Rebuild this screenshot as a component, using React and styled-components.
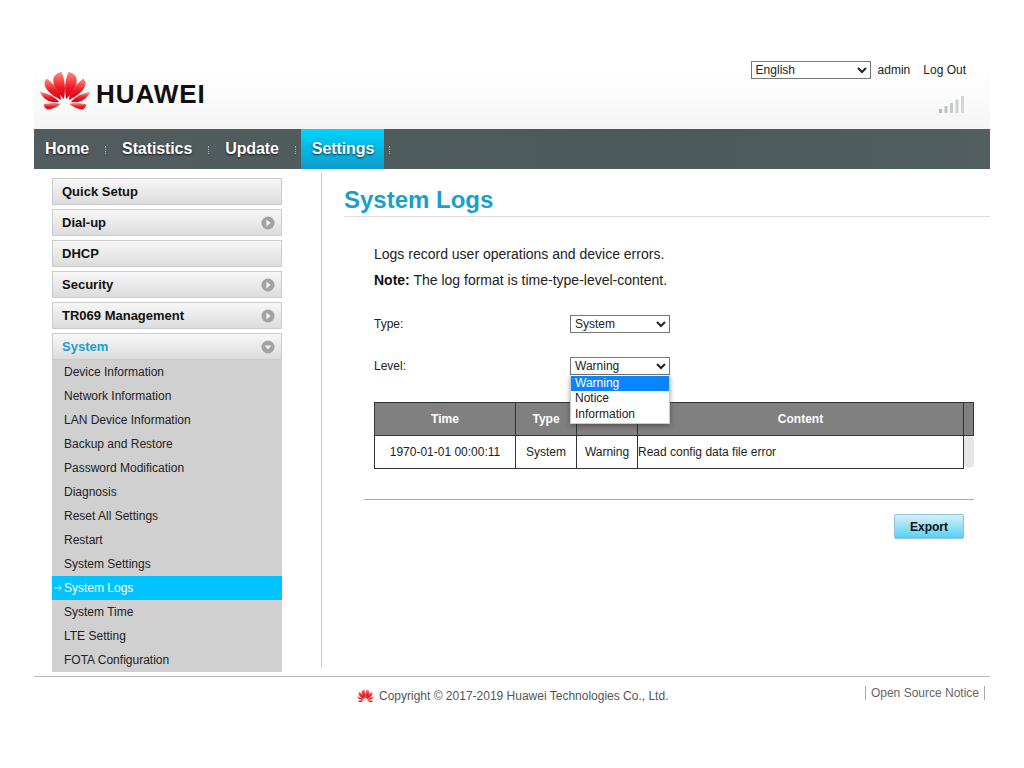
import React from 'react'
import styled, { createGlobalStyle } from 'styled-components'

const GlobalStyle = createGlobalStyle`
  html, body {
    margin: 0;
    padding: 0;
    background: #fff;
    font-family: "Liberation Sans", Arial, sans-serif;
    color: #222;
  }
`

const Page = styled.div`
  width: 956px;
  margin-left: 34px;
`

const Header = styled.header`
  height: 129px;
  display: flex;
  justify-content: space-between;
  background: linear-gradient(to bottom, #fff 65px, #fbfbfb 100px, #f4f4f4 129px);
`

const Brand = styled.div`
  display: flex;
  align-items: center;
  gap: 6px;
  padding: 72px 0 0 6px;
  height: 38px;
`

const Wordmark = styled.span`
  font-size: 26px;
  font-weight: 700;
  letter-spacing: 0.95px;
  color: #111;
  position: relative;
  top: 3px;
`

const TopRight = styled.div`
  display: flex;
  flex-direction: column;
  align-items: flex-end;
  padding: 61px 24px 0 0;
`

const UserBar = styled.div`
  display: flex;
  align-items: center;
  font-size: 12px;
  color: #222;
  height: 18px;
`

const Select = styled.select`
  width: ${props => props.$width}px;
  height: 18px;
  box-sizing: border-box;
  padding: 0;
  font-family: "Liberation Sans", Arial, sans-serif;
  font-size: 12px;
  color: #222;
  background: #fff;
`

const UserName = styled.span`
  margin-left: 7px;
  margin-right: 13px;
`

const SignalIcon = styled.svg`
  margin-top: 17px;
  margin-right: 1px;
  display: block;
`

const Nav = styled.nav`
  height: 40px;
  display: flex;
  align-items: stretch;
  background: linear-gradient(to right, #525c5f, #4c5a5b 70%, #525e5f);
`

const NavItem = styled.a`
  display: flex;
  align-items: center;
  padding: ${props => (props.$active ? '0 10px 0 11px' : '0 11px')};
  font-size: 16px;
  font-weight: 700;
  letter-spacing: -0.1px;
  color: #fff;
  text-shadow: 0 1px 2px rgba(0, 0, 0, 0.75);
  background: ${props => (props.$active ? 'linear-gradient(to bottom, #00d4ff, #0b9bcb)' : 'none')};
`

const NavSep = styled.span`
  align-self: center;
  width: 0;
  height: 8px;
  margin: 1px 5px 0;
  border-left: 1px dotted #a5acad;
`

const Body = styled.div`
  display: flex;
  align-items: flex-start;
  height: 507px;
`

const Sidebar = styled.aside`
  flex: none;
  width: 230px;
  margin-left: 18px;
  padding-top: 9px;
`

const MenuItem = styled.div`
  box-sizing: border-box;
  height: 27px;
  margin-bottom: ${props => (props.$open ? 0 : '4px')};
  padding: 0 6px 0 9px;
  display: flex;
  align-items: center;
  justify-content: space-between;
  border: 1px solid #ccc;
  background: linear-gradient(to bottom, #f7f7f7, #dcdcdc);
  font-size: 13px;
  font-weight: 700;
  color: ${props => (props.$open ? '#1a9fcb' : '#111')};
`

const SubMenu = styled.div`
  background: #d0d0d0;
`

const SubItem = styled.div`
  position: relative;
  height: 24px;
  line-height: 24px;
  padding-left: 12px;
  font-size: 12px;
  color: ${props => (props.$active ? '#fff' : '#222')};
  background: ${props => (props.$active ? '#00c3ff' : 'none')};
`

const SubArrow = styled.svg`
  position: absolute;
  left: 2px;
  top: 9px;
`

const Main = styled.main`
  flex: none;
  width: 646px;
  height: 496px;
  margin: 3px 0 0 39px;
  padding-left: 22px;
  border-left: 1px solid #ccc;
`

const Title = styled.h1`
  margin: 0;
  padding-top: 13px;
  height: 31px;
  line-height: 30px;
  box-sizing: content-box;
  font-size: 24px;
  font-weight: 700;
  color: #1a9fcb;
  border-bottom: 1px solid #ddd;
`

const Section = styled.div`
  padding: 24px 16px 0 20px;
`

const Intro = styled.p`
  margin: 0 0 0 10px;
  font-size: 14px;
  line-height: 26px;
  color: #222;
`

const Strong = styled.strong`
  color: #111;
`

const Field = styled.div`
  display: flex;
  align-items: center;
  height: 18px;
  margin: ${props => props.$top}px 0 0 10px;
  font-size: 12px;
`

const FieldLabel = styled.label`
  width: 196px;
`

const SelectWrap = styled.div`
  position: relative;
  height: 18px;
`

const Dropdown = styled.ul`
  position: absolute;
  left: 0;
  top: 18px;
  z-index: 5;
  width: 100px;
  margin: 0;
  padding: 0.5px 0 1px;
  box-sizing: border-box;
  list-style: none;
  background: #fff;
  border: 1px solid #ccc;
  border-top: 0;
  box-shadow: 0 2px 5px rgba(0, 0, 0, 0.35);
`

const Option = styled.li`
  height: 15.5px;
  line-height: 15.5px;
  padding-left: 4px;
  color: ${props => (props.$active ? '#fff' : '#222')};
  background: ${props => (props.$active ? '#0a84ff' : 'none')};
`

const LogTable = styled.table`
  width: 599px;
  margin: 27px 0 0 10px;
  border-collapse: collapse;
  table-layout: fixed;
  font-size: 12px;
`

const Th = styled.th`
  height: 32px;
  padding: 0;
  border: 1px solid #333;
  background: #808080;
  color: #fff;
  font-weight: 700;
`

const Td = styled.td`
  height: 32px;
  padding: 0;
  border: 1px solid #333;
  color: #222;
  text-align: ${props => (props.$left ? 'left' : 'center')};
`

const ScrollCell = styled.td`
  padding: 0;
  height: 32px;
`

const ScrollThumb = styled.div`
  height: 32px;
  border-radius: 5px;
  background: #e6e6e6;
`

const Rule = styled.hr`
  margin: 30px 0 0;
  border: 0;
  border-top: 1px solid #aaa;
`

const Actions = styled.div`
  display: flex;
  justify-content: flex-end;
  padding: 14px 10px 0 0;
`

const ExportButton = styled.button`
  width: 70px;
  height: 25px;
  padding: 0;
  border: 1px solid #8ec4da;
  border-radius: 2px;
  background: linear-gradient(to bottom, #d8f1fb, #55cff6);
  font-family: "Liberation Sans", Arial, sans-serif;
  font-size: 12px;
  font-weight: 700;
  color: #111;
`

const Footer = styled.footer`
  position: relative;
  height: 40px;
  border-top: 1px solid #bbb;
  display: flex;
  align-items: flex-start;
  font-size: 12px;
  color: #555;
`

const Copyright = styled.div`
  display: flex;
  align-items: center;
  gap: 5px;
  margin: 11px 0 0 323px;
  height: 15px;
`

const Notice = styled.div`
  margin: 9px 5px 0 auto;
  padding: 0 5px 0 5px;
  height: 14px;
  line-height: 14px;
  color: #666;
  border-left: 1px solid #aaa;
  border-right: 1px solid #aaa;
`

const Logo = ({ width, height, id }) => {
  const left = [
    'M47.5 54 C35 41 24 27 27 12 C29 6 36 1 43 0 C50 15 52 36 47.5 54Z',
    'M42 56 C28 49 10 38 9 23 C9 20 10 17 13 13 C25 22 42 37 42 56Z',
    'M38 60 C24 63 7 57 0 40 C14 42 30 49 38 60Z',
    'M42 63.5 C34 70 24 75 14 75 C11 73 8 69 7 65 C18 62 31 61 42 63.5Z',
  ]
  return (
    <svg width={width} height={height} viewBox="0 0 100 76">
      <defs>
        <linearGradient id={id} x1="0" y1="0" x2="0" y2="1">
          <stop offset="0" stopColor="#ff8f80" />
          <stop offset="0.55" stopColor="#ee1c25" />
          <stop offset="1" stopColor="#d9001b" />
        </linearGradient>
      </defs>
      {left.map(d => (
        <path key={d} d={d} fill={`url(#${id})`} />
      ))}
      <g transform="matrix(-1 0 0 1 100 0)">
        {left.map(d => (
          <path key={d} d={d} fill={`url(#${id})`} />
        ))}
      </g>
    </svg>
  )
}

const Signal = () => (
  <SignalIcon width="26" height="18" viewBox="0 0 26 18">
    <rect x="0" y="13" width="3" height="4" fill="#b4baba" />
    <rect x="5.5" y="10" width="3" height="7" fill="#bcc1c1" />
    <rect x="11" y="7" width="3" height="10" fill="#c4c8c8" />
    <rect x="16.5" y="3.5" width="3" height="13.5" fill="#cbcfcf" />
    <rect x="22" y="0" width="3" height="17" fill="#d3d6d6" />
  </SignalIcon>
)

const Chevron = ({ open }) => (
  <svg width="14" height="14" viewBox="0 0 14 14">
    <circle cx="7" cy="7" r="6.5" fill="#a2a2a2" />
    {open ? <path d="M3.6 5.5 H10.4 L7 9.6Z" fill="#f2f2f2" /> : <path d="M5.4 3.6 L9.6 7 L5.4 10.4Z" fill="#f2f2f2" />}
  </svg>
)

const subItems = [
  'Device Information',
  'Network Information',
  'LAN Device Information',
  'Backup and Restore',
  'Password Modification',
  'Diagnosis',
  'Reset All Settings',
  'Restart',
  'System Settings',
  'System Logs',
  'System Time',
  'LTE Setting',
  'FOTA Configuration',
]

const menu = [
  { label: 'Quick Setup' },
  { label: 'Dial-up', arrow: true },
  { label: 'DHCP' },
  { label: 'Security', arrow: true },
  { label: 'TR069 Management', arrow: true },
]

const App = () => (
  <Page>
    <GlobalStyle />
    <Header>
      <Brand>
        <Logo width={50} height={38} id="petals" />
        <Wordmark>HUAWEI</Wordmark>
      </Brand>
      <TopRight>
        <UserBar>
          <Select $width={120} defaultValue="English">
            <option>English</option>
          </Select>
          <UserName>admin</UserName>
          <span>Log Out</span>
        </UserBar>
        <Signal />
      </TopRight>
    </Header>
    <Nav>
      <NavItem>Home</NavItem>
      <NavSep />
      <NavItem>Statistics</NavItem>
      <NavSep />
      <NavItem>Update</NavItem>
      <NavSep />
      <NavItem $active>Settings</NavItem>
      <NavSep />
    </Nav>
    <Body>
      <Sidebar>
        {menu.map(item => (
          <MenuItem key={item.label}>
            {item.label}
            {item.arrow && <Chevron />}
          </MenuItem>
        ))}
        <MenuItem $open>
          System
          <Chevron open />
        </MenuItem>
        <SubMenu>
          {subItems.map(name => (
            <SubItem key={name} $active={name === 'System Logs'}>
              {name === 'System Logs' && (
                <SubArrow width="8" height="6" viewBox="0 0 8 6">
                  <path d="M0 3 H7.5 M5 0.5 L7.5 3 L5 5.5" fill="none" stroke="#e8fbff" strokeWidth="0.8" />
                </SubArrow>
              )}
              {name}
            </SubItem>
          ))}
        </SubMenu>
      </Sidebar>
      <Main>
        <Title>System Logs</Title>
        <Section>
          <Intro>Logs record user operations and device errors.</Intro>
          <Intro>
            <Strong>Note:</Strong> The log format is time-type-level-content.
          </Intro>
          <Field $top={22}>
            <FieldLabel>Type:</FieldLabel>
            <SelectWrap>
              <Select $width={100} defaultValue="System">
                <option>System</option>
              </Select>
            </SelectWrap>
          </Field>
          <Field $top={24}>
            <FieldLabel>Level:</FieldLabel>
            <SelectWrap>
              <Select $width={100} defaultValue="Warning">
                <option>Warning</option>
              </Select>
              <Dropdown>
                <Option $active>Warning</Option>
                <Option>Notice</Option>
                <Option>Information</Option>
              </Dropdown>
            </SelectWrap>
          </Field>
          <LogTable>
            <colgroup>
              <col width="141" />
              <col width="61" />
              <col width="61" />
              <col width="326" />
              <col width="10" />
            </colgroup>
            <thead>
              <tr>
                <Th>Time</Th>
                <Th>Type</Th>
                <Th>Level</Th>
                <Th>Content</Th>
                <Th />
              </tr>
            </thead>
            <tbody>
              <tr>
                <Td>1970-01-01 00:00:11</Td>
                <Td>System</Td>
                <Td>Warning</Td>
                <Td $left>Read config data file error</Td>
                <ScrollCell>
                  <ScrollThumb />
                </ScrollCell>
              </tr>
            </tbody>
          </LogTable>
          <Rule />
          <Actions>
            <ExportButton>Export</ExportButton>
          </Actions>
        </Section>
      </Main>
    </Body>
    <Footer>
      <Copyright>
        <Logo width={17} height={14} id="petalsSmall" />
        <span>Copyright © 2017-2019 Huawei Technologies Co., Ltd.</span>
      </Copyright>
      <Notice>Open Source Notice</Notice>
    </Footer>
  </Page>
)

export default App
